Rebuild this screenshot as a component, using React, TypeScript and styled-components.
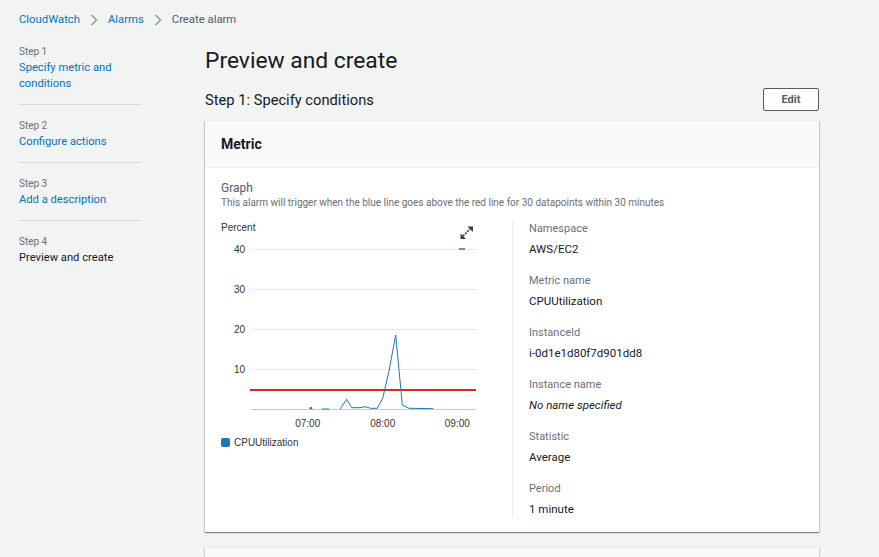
import React from "react";
import styled, { createGlobalStyle } from "styled-components";

const GlobalStyle = createGlobalStyle`
  html, body { margin: 0; padding: 0; }
  body {
    background: #f2f3f3;
    font-family: Roboto, "Liberation Sans", Arial, sans-serif;
    color: #16191f;
  }
  * { box-sizing: border-box; }
`;

const Page = styled.div`
  width: 879px;
  min-height: 557px;
  overflow: hidden;
`;

const Breadcrumbs = styled.nav`
  height: 40px;
  display: flex;
  align-items: center;
  padding-left: 19px;
  font-size: 11.3px;
`;

const Crumb = styled.a<{ $current?: boolean }>`
  color: ${(p) => (p.$current ? "#545b64" : "#0073bb")};
  text-decoration: none;
  line-height: 16px;
`;

const Chevron = styled.span`
  display: inline-flex;
  width: 28px;
  justify-content: center;
`;

const Layout = styled.div`
  display: flex;
  align-items: flex-start;
`;

const SideNav = styled.ol`
  list-style: none;
  margin: 0 0 0 19px;
  padding: 4px 0 0;
  width: 122px;
  flex: none;
`;

const NavItem = styled.li<{ $first?: boolean; $last?: boolean }>`
  padding: ${(p) => (p.$first ? "0" : "13px")} 0 12px;
  border-bottom: ${(p) => (p.$last ? "none" : "1px solid #d5dbdb")};
`;

const StepLabel = styled.div`
  font-size: 10px;
  line-height: 16px;
  color: #687078;
`;

const StepLink = styled.a<{ $active?: boolean }>`
  display: block;
  font-size: 11.2px;
  line-height: 16px;
  color: ${(p) => (p.$active ? "#16191f" : "#0073bb")};
  text-decoration: none;
`;

const Main = styled.main`
  margin-left: 64px;
  width: 614px;
  flex: none;
`;

const Title = styled.h1`
  margin: 6px 0 0;
  font-size: 22.8px;
  line-height: 30px;
  font-weight: 400;
  color: #16191f;
`;

const SectionHeader = styled.div`
  margin-top: 12px;
  display: flex;
  align-items: center;
  justify-content: space-between;
  height: 23px;
`;

const SectionTitle = styled.h2`
  margin: 0;
  font-size: 14.7px;
  font-weight: 400;
  line-height: 20px;
  color: #16191f;
`;

const EditButton = styled.button`
  width: 56px;
  height: 23px;
  border: 1px solid #545b64;
  border-radius: 2px;
  background: #fff;
  color: #545b64;
  font-family: inherit;
  font-weight: 700;
  font-size: 11px;
  padding: 0;
`;

const Card = styled.section`
  margin-top: 9px;
  background: #fff;
  border-top: 1px solid #eaeded;
  box-shadow: 0 1px 1px 0 rgba(0, 28, 36, 0.3), 1px 1px 1px 0 rgba(0, 28, 36, 0.15),
    -1px 1px 1px 0 rgba(0, 28, 36, 0.15);
`;

const CardHeader = styled.div`
  height: 47px;
  background: #fafafa;
  border-bottom: 1px solid #eaeded;
  padding: 0 16px;
  display: flex;
  align-items: center;
  font-size: 14px;
  font-weight: 700;
  color: #16191f;
`;

const CardBody = styled.div`
  padding: 12px 16px 15px;
`;

const GraphTitle = styled.div`
  font-size: 12px;
  line-height: 16px;
  color: #545b64;
`;

const GraphDesc = styled.div`
  font-size: 10px;
  line-height: 14px;
  color: #687078;
`;

const Columns = styled.div`
  margin-top: 11px;
  display: grid;
  grid-template-columns: 1fr 1fr;
`;

const ChartCol = styled.div`
  svg {
    display: block;
  }
`;

const Legend = styled.div`
  display: flex;
  align-items: center;
  gap: 4px;
  height: 12px;
  font-family: "Liberation Sans", Arial, sans-serif;
  font-size: 10px;
  color: #333;
`;

const Swatch = styled.span`
  width: 9px;
  height: 9px;
  border-radius: 2px;
  background: #1f77b4;
`;

const Details = styled.dl`
  margin: 0;
  border-left: 1px solid #eaeded;
  padding-left: 16px;
  display: flex;
  flex-direction: column;
  gap: 16px;
`;

const Pair = styled.div`
  display: flex;
  flex-direction: column;
  gap: 4px;
`;

const Label = styled.dt`
  font-size: 11px;
  line-height: 16px;
  color: #687078;
`;

const Value = styled.dd<{ $muted?: boolean }>`
  margin: 0;
  font-size: 11.5px;
  line-height: 16px;
  color: #16191f;
  font-style: ${(p) => (p.$muted ? "italic" : "normal")};
`;

const NextCard = styled.section`
  margin-top: 16px;
  height: 60px;
  background: #fafafa;
  box-shadow: 1px 0 1px 0 rgba(0, 28, 36, 0.15), -1px 0 1px 0 rgba(0, 28, 36, 0.15);
`;

const ChevronIcon = () => (
  <svg width="8" height="12" viewBox="0 0 8 12" fill="none">
    <path d="M1.5 1l5 5-5 5" stroke="#879596" strokeWidth="1.3" />
  </svg>
);

const points: [number, number][] = [
  [119, 188],
  [125.7, 178.3],
  [130.7, 186.7],
  [139, 186.7],
  [144, 185.7],
  [149.7, 187.3],
  [156.3, 187.3],
  [161.7, 177.3],
  [168, 150],
  [174.7, 114],
  [181.3, 184],
  [188, 187.3],
  [212.3, 187.7],
];

const Chart = () => {
  const axisFont = { fontFamily: "'Liberation Sans', Arial, sans-serif", fontSize: 10, fill: "#333" };
  const grid = [28, 68, 108, 148];
  const yLabels = ["40", "30", "20", "10"];
  return (
    <svg width="270" height="215" viewBox="0 0 270 215">
      <text x="0" y="9.5" {...axisFont}>Percent</text>
      {grid.map((y, i) => (
        <g key={y}>
          <line x1="30" x2="255" y1={y + 0.5} y2={y + 0.5} stroke="#e6e9e9" />
          <text x="24" y={y + 3.8} textAnchor="end" {...axisFont}>
            {yLabels[i]}
          </text>
        </g>
      ))}
      <line x1="30" x2="255" y1="188.5" y2="188.5" stroke="#c6cbcc" />
      <line x1="29" x2="255" y1="169" y2="169" stroke="#d62728" strokeWidth="2" />
      <circle cx="90" cy="187.3" r="1.3" fill="#1f77b4" />
      <line x1="101" x2="108" y1="188" y2="188" stroke="#1f77b4" />
      <polyline
        points={points.map((p) => p.join(",")).join(" ")}
        fill="none"
        stroke="#1f77b4"
        strokeWidth="1"
        strokeLinejoin="round"
      />
      <line x1="238" x2="244" y1="28" y2="28" stroke="#1f77b4" strokeWidth="1.5" />
      <g fill="#3a3a3a" stroke="#3a3a3a">
        <line x1="242" y1="15" x2="249" y2="8" strokeWidth="1.5" strokeDasharray="2 1" />
        <path d="M239.5 12.5 L239.5 18 L245 18 Z" stroke="none" />
        <path d="M246.5 5.5 L252 5.5 L252 11 Z" stroke="none" />
      </g>
      {[
        [86.7, "07:00"],
        [161.7, "08:00"],
        [236.3, "09:00"],
      ].map(([x, t]) => (
        <text key={t as string} x={x as number} y="206" textAnchor="middle" {...axisFont}>
          {t}
        </text>
      ))}
    </svg>
  );
};

const details: { label: string; value: string; muted?: boolean }[] = [
  { label: "Namespace", value: "AWS/EC2" },
  { label: "Metric name", value: "CPUUtilization" },
  { label: "InstanceId", value: "i-0d1e1d80f7d901dd8" },
  { label: "Instance name", value: "No name specified", muted: true },
  { label: "Statistic", value: "Average" },
  { label: "Period", value: "1 minute" },
];

const steps = [
  { step: "Step 1", title: "Specify metric and conditions" },
  { step: "Step 2", title: "Configure actions" },
  { step: "Step 3", title: "Add a description" },
  { step: "Step 4", title: "Preview and create", active: true },
];

export default function App() {
  return (
    <Page>
      <GlobalStyle />
      <Breadcrumbs>
        <Crumb href="#">CloudWatch</Crumb>
        <Chevron>
          <ChevronIcon />
        </Chevron>
        <Crumb href="#">Alarms</Crumb>
        <Chevron>
          <ChevronIcon />
        </Chevron>
        <Crumb $current>Create alarm</Crumb>
      </Breadcrumbs>
      <Layout>
        <SideNav>
          {steps.map((s, i) => (
            <NavItem key={s.step} $first={i === 0} $last={i === steps.length - 1}>
              <StepLabel>{s.step}</StepLabel>
              <StepLink href="#" $active={s.active}>
                {s.title}
              </StepLink>
            </NavItem>
          ))}
        </SideNav>
        <Main>
          <Title>Preview and create</Title>
          <SectionHeader>
            <SectionTitle>Step 1: Specify conditions</SectionTitle>
            <EditButton>Edit</EditButton>
          </SectionHeader>
          <Card>
            <CardHeader>Metric</CardHeader>
            <CardBody>
              <GraphTitle>Graph</GraphTitle>
              <GraphDesc>
                This alarm will trigger when the blue line goes above the red line for 30 datapoints within 30 minutes
              </GraphDesc>
              <Columns>
                <ChartCol>
                  <Chart />
                  <Legend>
                    <Swatch />
                    CPUUtilization
                  </Legend>
                </ChartCol>
                <Details>
                  {details.map((d) => (
                    <Pair key={d.label}>
                      <Label>{d.label}</Label>
                      <Value $muted={d.muted}>{d.value}</Value>
                    </Pair>
                  ))}
                </Details>
              </Columns>
            </CardBody>
          </Card>
          <NextCard />
        </Main>
      </Layout>
    </Page>
  );
}
